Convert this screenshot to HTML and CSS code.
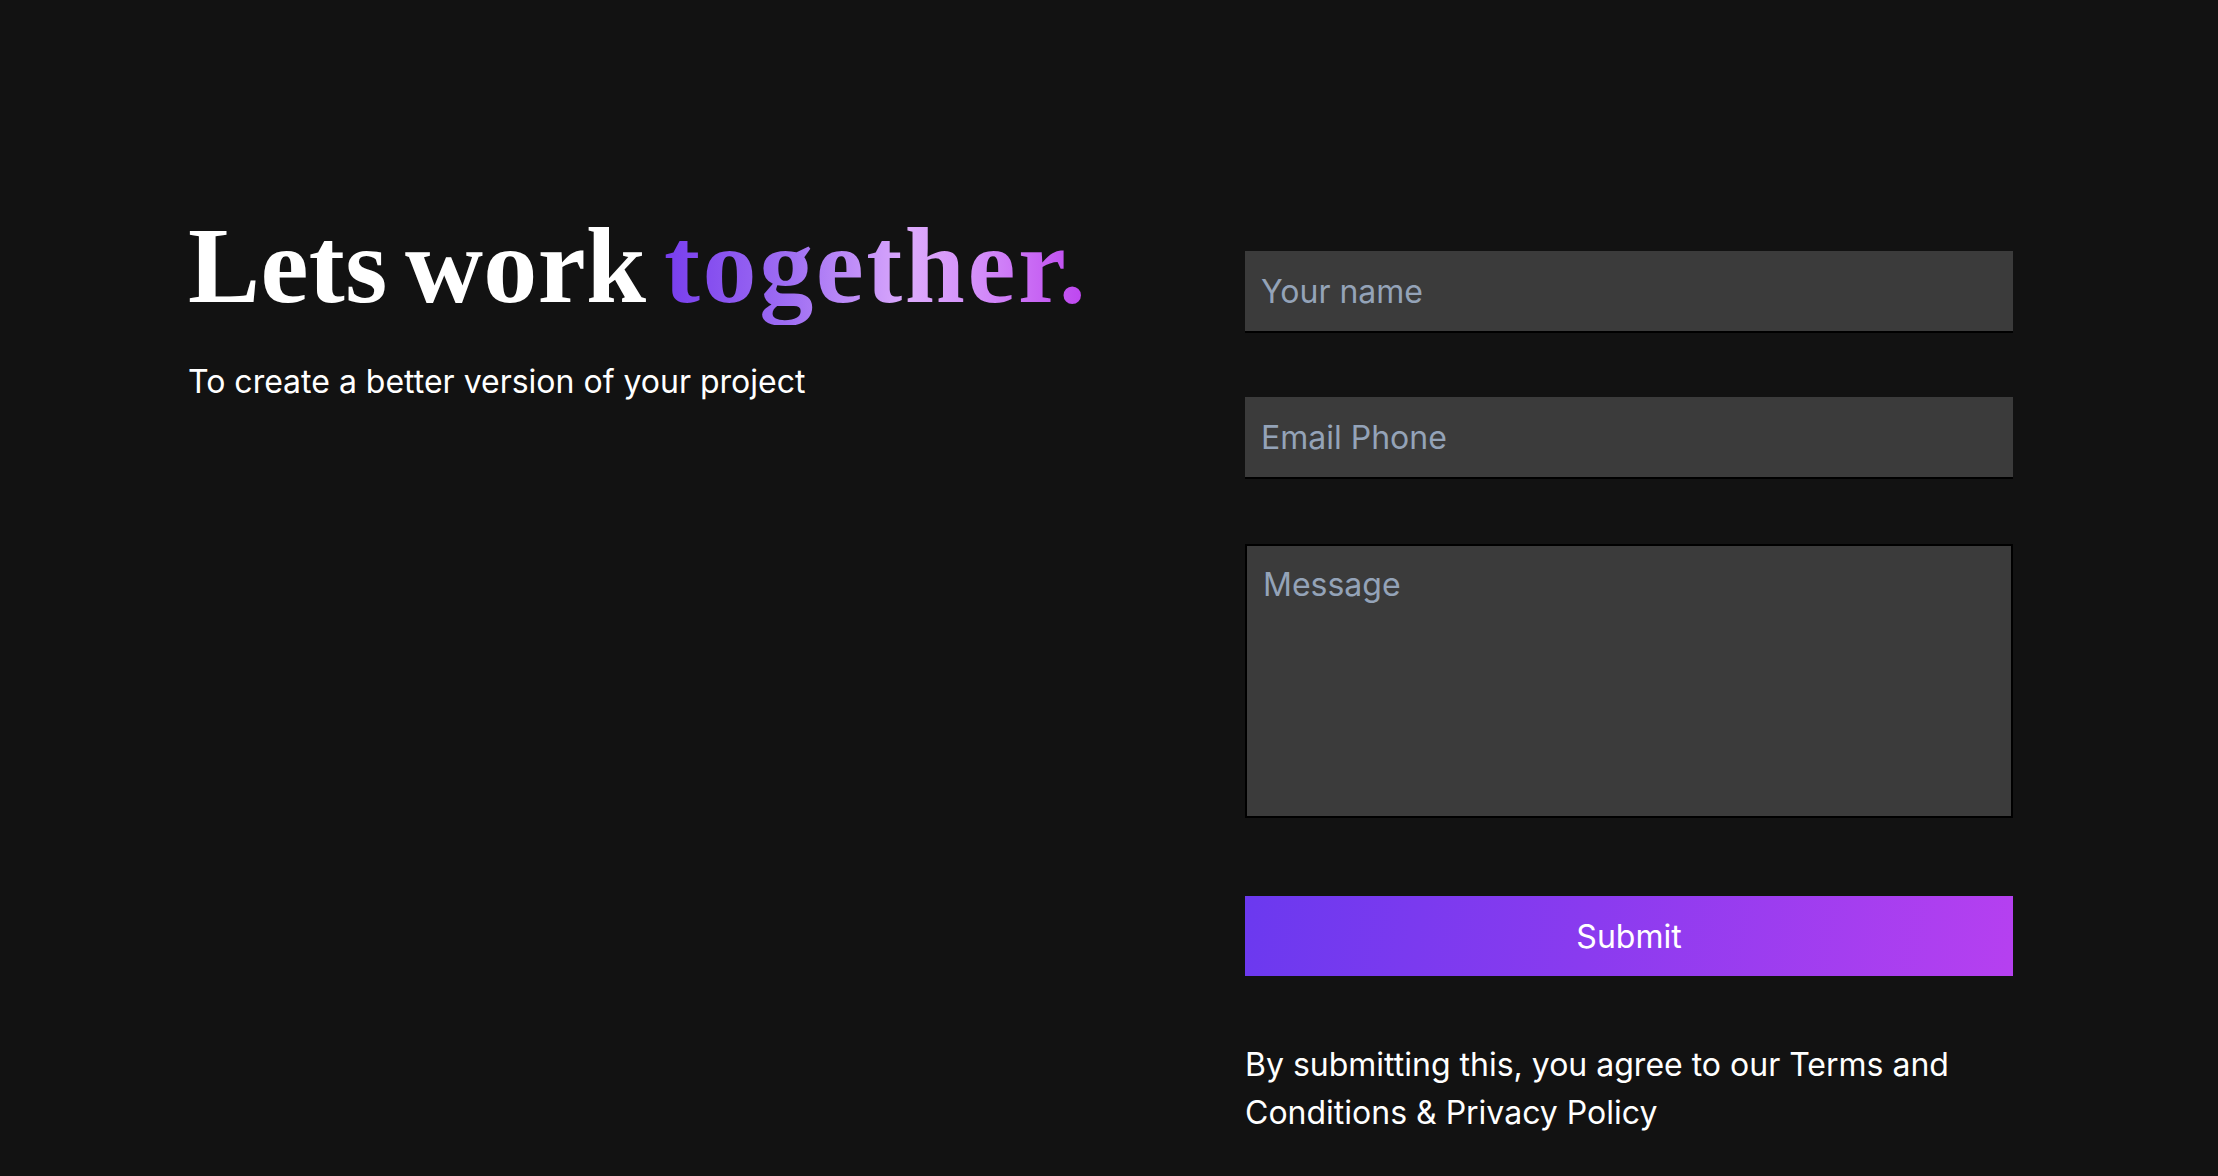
FILE: index.html
```html
<!DOCTYPE html>
<html lang="en">
<head>
<meta charset="utf-8">
<title>Contact</title>
<link rel="stylesheet" href="styles.css">
</head>
<body>
<main class="page">
  <section class="intro">
    <h1 class="title">Lets work <span class="grad">together.</span></h1>
    <p class="subtitle">To create a better version of your project</p>
  </section>
  <form class="form">
    <input class="field" type="text" placeholder="Your name">
    <input class="field" type="text" placeholder="Email Phone">
    <textarea class="area" placeholder="Message"></textarea>
    <button class="submit" type="button">Submit</button>
    <p class="terms">By submitting this, you agree to our Terms and Conditions &amp; Privacy Policy</p>
  </form>
</main>
</body>
</html>
```
FILE: styles.css
```css
html, body {
  margin: 0;
  padding: 0;
  background: #121212;
  height: 100%;
}
body {
  font-family: Inter, "Noto Sans", sans-serif;
  color: #ffffff;
}
.page {
  display: grid;
  grid-template-columns: 1057px 768px;
  padding: 211px 0 0 188px;
  box-sizing: border-box;
  min-height: 100%;
}
.title {
  margin: 0;
  font-family: "Liberation Serif", "DejaVu Serif", serif;
  font-weight: 700;
  font-size: 108px;
  line-height: 110px;
  letter-spacing: 0.4px;
  word-spacing: -10px;
  color: #ffffff;
  white-space: nowrap;
}
.grad {
  letter-spacing: 2.6px;
  background: linear-gradient(90deg, #773ded 0%, #a06ff3 30%, #dcaafc 58%, #d38cf9 75%, #bd43ef 100%);
  -webkit-background-clip: text;
  background-clip: text;
  color: transparent;
}
.subtitle {
  margin: 37px 0 0;
  font-size: 32px;
  line-height: 48px;
}
.form {
  display: flex;
  flex-direction: column;
  padding-top: 40px;
}
.field, .area, .submit {
  font-family: Inter, "Noto Sans", sans-serif;
  font-size: 32px;
  box-sizing: border-box;
  width: 768px;
  margin: 0;
  outline: none;
}
.field {
  height: 82px;
  border: none;
  border-bottom: 2px solid #000;
  background: #3b3b3b;
  color: #fff;
  padding: 0 16px;
  margin-bottom: 64px;
}
.area {
  height: 274px;
  border: 2px solid #000;
  background: #3b3b3b;
  color: #fff;
  padding: 15px 16px;
  line-height: 48px;
  resize: none;
  margin-top: 1px;
}
.field::placeholder, .area::placeholder {
  color: #94a3b8;
  opacity: 1;
}
.submit {
  margin-top: 78px;
  height: 80px;
  border: none;
  color: #fff;
  background: linear-gradient(100deg, #6b39ef 0%, #8a3bef 45%, #b640f0 100%);
  cursor: pointer;
}
.terms {
  margin: 65px 0 0;
  font-size: 32px;
  line-height: 48px;
  width: 768px;
}
```
